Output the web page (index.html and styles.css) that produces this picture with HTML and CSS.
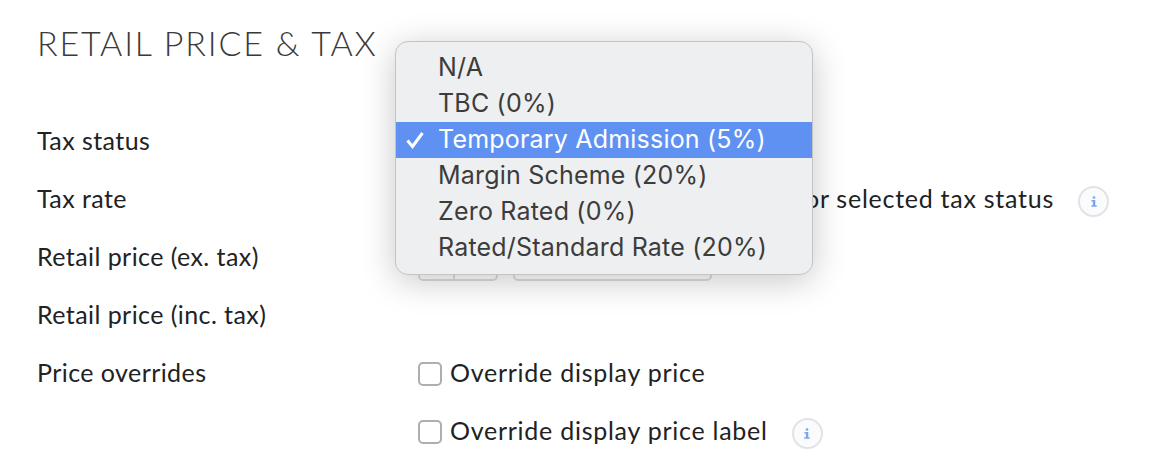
FILE: index.html
```html
<!DOCTYPE html>
<html lang="en">
<head>
<meta charset="utf-8">
<title>Retail price &amp; tax</title>
<link rel="stylesheet" href="styles.css">
</head>
<body>
<main class="page">
  <h2 class="title">RETAIL PRICE &amp; TAX</h2>
  <div class="form">
    <div class="row">
      <div class="label">Tax status</div>
      <div class="control"></div>
    </div>
    <div class="row">
      <div class="label">Tax rate</div>
      <div class="control">
        <span class="note">or selected tax status</span>
        <span class="info"><svg viewBox="0 0 10 14" class="info-glyph"><circle cx="5" cy="2" r="1.7"/><path d="M1.8 5.2H6.6V11.8H8.4V13.6H1.6V11.8H3.6V7H1.8Z"/></svg></span>
      </div>
    </div>
    <div class="row">
      <div class="label">Retail price (ex. tax)</div>
      <div class="control">
        <div class="currency"><span class="cur-cell"></span><span class="cur-cell"></span></div>
        <div class="amount"></div>
      </div>
    </div>
    <div class="row">
      <div class="label">Retail price (inc. tax)</div>
      <div class="control"></div>
    </div>
    <div class="row">
      <div class="label">Price overrides</div>
      <div class="control">
        <span class="box"></span><span class="check-label">Override display price</span>
      </div>
    </div>
    <div class="row">
      <div class="label"></div>
      <div class="control">
        <span class="box"></span><span class="check-label">Override display price label</span>
        <span class="info"><svg viewBox="0 0 10 14" class="info-glyph"><circle cx="5" cy="2" r="1.7"/><path d="M1.8 5.2H6.6V11.8H8.4V13.6H1.6V11.8H3.6V7H1.8Z"/></svg></span>
      </div>
    </div>
  </div>
  <ul class="menu">
    <li class="item">N/A</li>
    <li class="item">TBC (0%)</li>
    <li class="item selected"><svg class="tick" viewBox="0 0 20 20"><path d="M2.5 10.5L7.5 16.5L17.5 3" /></svg>Temporary Admission (5%)</li>
    <li class="item">Margin Scheme (20%)</li>
    <li class="item">Zero Rated (0%)</li>
    <li class="item">Rated/Standard Rate (20%)</li>
  </ul>
</main>
</body>
</html>
```

FILE: styles.css
```css
* { box-sizing: border-box; }
html, body { margin: 0; height: 466px; overflow: hidden; background: #fff; }
.page {
  position: relative;
  height: 466px;
  padding: 21px 0 0 37px;
  font-family: Lato, "Liberation Sans", sans-serif;
  color: #222;
}
.title {
  margin: 0;
  font-size: 34px;
  line-height: 44px;
  font-weight: 300;
  letter-spacing: 1.8px;
  color: #3a3a3a;
}
.form { margin-top: 48px; }
.row { display: flex; align-items: center; height: 58px; font-size: 25px; }
.label { width: 381px; flex: none; padding-bottom: 4px; letter-spacing: 0.43px; }
.control { display: flex; align-items: center; flex: 1; min-width: 0; }
.note, .check-label { white-space: nowrap; padding-bottom: 4px; letter-spacing: 0.74px; }
.note { margin-left: 387px; }
.info {
  display: flex; align-items: center; justify-content: center;
  width: 31px; height: 31px; border-radius: 50%;
  margin: 2px 0 0 24px;
  border: 2px solid #e1e3e6; background: #fafbfc;
}
.info-glyph { width: 8px; height: 13px; fill: #7ba4ea; }
.currency { display: flex; width: 80px; height: 46px; border: 2px solid #dcdcdc; border-radius: 5px; }
.cur-cell { width: 33px; flex: none; }
.cur-cell + .cur-cell { flex: 1; border-left: 2px solid #dcdcdc; }
.amount { width: 199px; height: 46px; margin-left: 15px; border: 2px solid #dcdcdc; border-radius: 5px; }
.box {
  width: 24px; height: 24px; border: 2px solid #aeaeae; border-radius: 5px;
  background: #fff; margin-right: 8px; flex: none;
}
.menu {
  position: absolute; left: 395px; top: 41px;
  width: 418px; height: 234px;
  margin: 0; padding: 8px 0;
  list-style: none;
  background: #eeeff0;
  border: 1px solid #c4c4c4;
  border-radius: 13px;
  box-shadow: 0 6px 34px rgba(0, 0, 0, 0.22);
  font-family: Inter, "Liberation Sans", sans-serif;
  font-size: 25px;
  letter-spacing: 0.2px;
  color: #3c3c3c;
}
.item { position: relative; height: 36px; line-height: 35px; padding-left: 42px; white-space: nowrap; }
.selected { background: #5e91f2; color: #fff; }
.tick {
  position: absolute; left: 9px; top: 8px; width: 20px; height: 20px;
  fill: none; stroke: #fff; stroke-width: 3;
}
```
